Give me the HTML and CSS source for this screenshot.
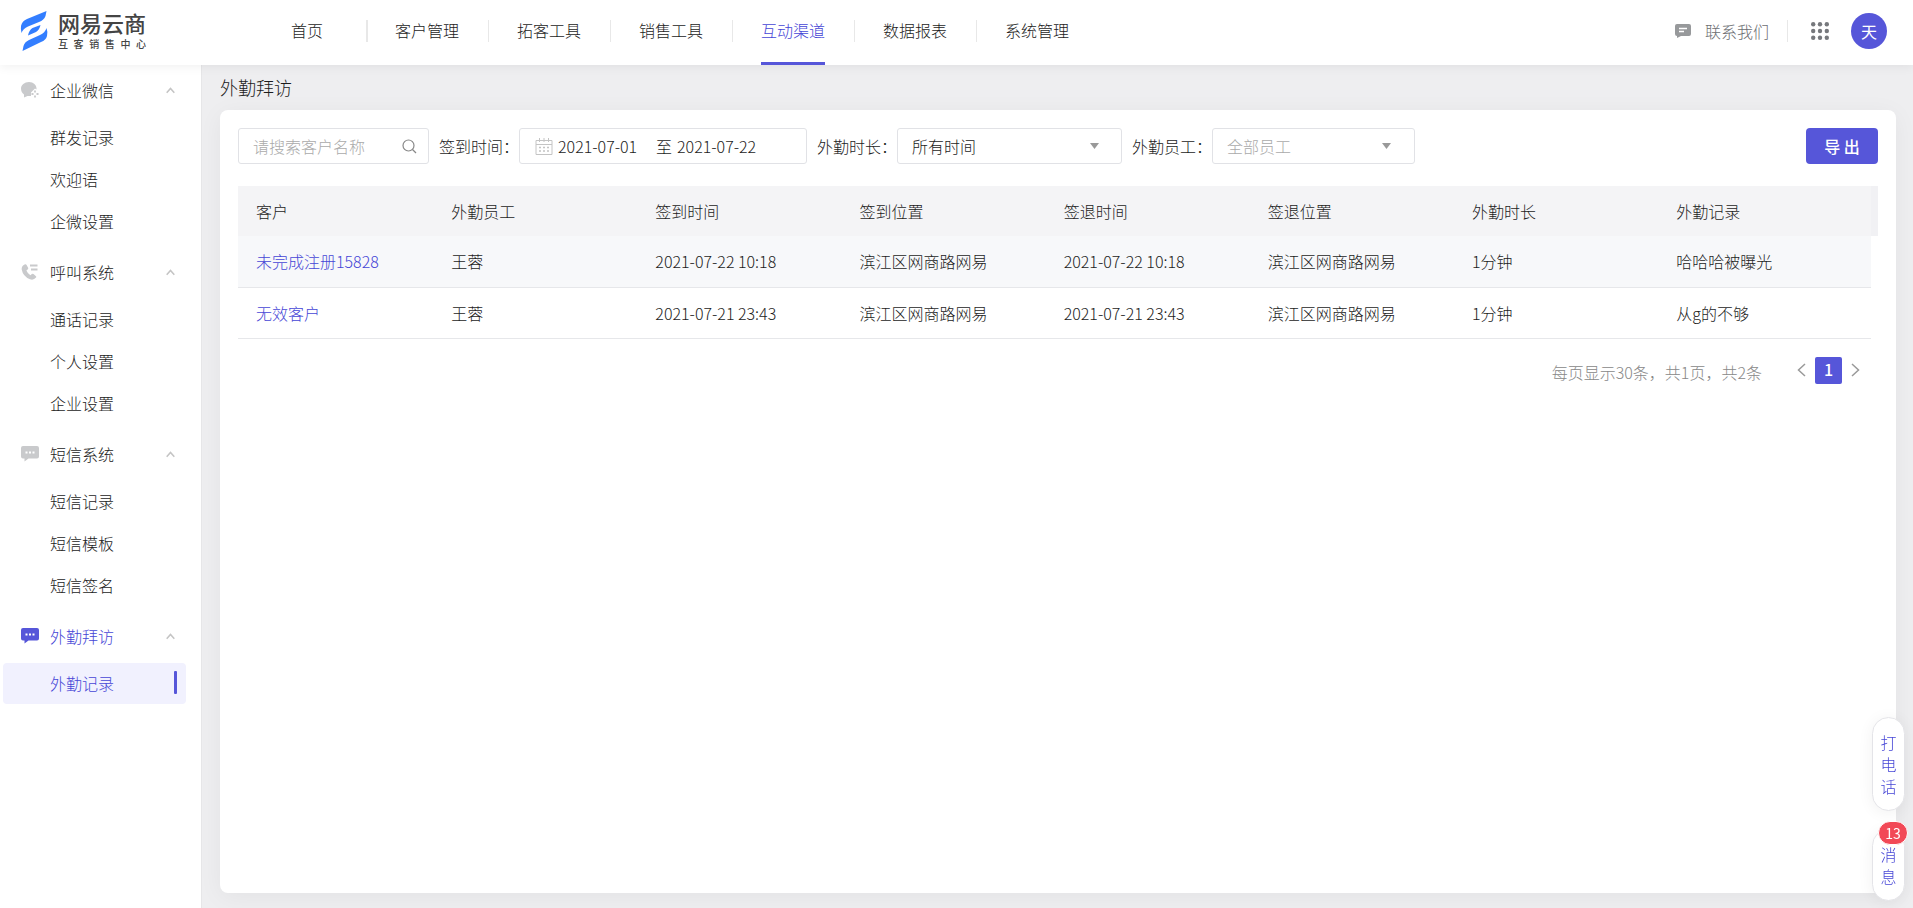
FILE: index.html
```html
<!DOCTYPE html>
<html lang="zh-CN">
<head>
<meta charset="utf-8">
<title>外勤拜访</title>
<link rel="stylesheet" href="styles.css">
</head>
<body>
<header class="topbar">
  <a class="logo" href="#">
    <svg class="logo-mark" width="28" height="42" viewBox="0 0 28 42" aria-hidden="true">
      <path fill="#337eff" d="M26.500 1 25.500 6Q24 10 19 12L8 16.500Q3 18.500 1.500 23Q.5 19 1 16Q2 11 7 9ZM20.500 15Q19.500 20 16 22L8 25.500Q9 20 12.500 18ZM26.500 18Q28 22 27 26Q26 30 21 32L2.500 41 3.500 36Q4.500 32 9 30L20 25Q25 23 26.500 18Z"/>
    </svg>
    <span class="logo-words">
      <span class="logo-name">网易云商</span>
      <span class="logo-sub">互客销售中心</span>
    </span>
  </a>
  <nav class="nav">
    <a class="nav-home" href="#">首页</a>
    <a href="#">客户管理</a>
    <a href="#">拓客工具</a>
    <a href="#">销售工具</a>
    <a class="active" href="#">互动渠道</a>
    <a href="#">数据报表</a>
    <a href="#">系统管理</a>
  </nav>
  <div class="tools">
    <a class="contact" href="#">
      <svg width="18" height="16" viewBox="0 0 18 16" aria-hidden="true"><path fill="#97999b" d="M3 1h12q2 0 2 2v8q0 2-2 2H7l-4 2v-2H3q-2 0-2-2V3q0-2 2-2z"/><path stroke="#fff" stroke-width="1.500" d="M5 5.500h8M5 8.500h5"/></svg>
      <span>联系我们</span>
    </a>
    <button class="apps" type="button" aria-label="应用">
      <svg width="18" height="18" viewBox="0 0 18 18" fill="#76787c" aria-hidden="true"><circle cx="2.200" cy="2.200" r="2.200"/><circle cx="9" cy="2.200" r="2.200"/><circle cx="15.800" cy="2.200" r="2.200"/><circle cx="2.200" cy="9" r="2.200"/><circle cx="9" cy="9" r="2.200"/><circle cx="15.800" cy="9" r="2.200"/><circle cx="2.200" cy="15.800" r="2.200"/><circle cx="9" cy="15.800" r="2.200"/><circle cx="15.800" cy="15.800" r="2.200"/></svg>
    </button>
    <button class="avatar" type="button">天</button>
  </div>
</header>
<div class="layout">
  <aside class="sidebar">
    <section class="group">
      <button class="group-head" type="button">
        <svg width="18" height="16" viewBox="0 0 18 16" aria-hidden="true"><path fill="#c9cacc" d="M8 0c4.500 0 7.500 3 7.500 6.500v1l-1.500-1-4 4v3.500H6.500L3 15.500V12.500C1 11 0 9 0 6.500 0 3 3.500 0 8 0z"/><path fill="none" stroke="#c9cacc" stroke-width="1.800" d="M14 8.500v2M14 13.500v2M10.500 12h2M15.500 12h2"/></svg>
        <span>企业微信</span>
        <svg class="caret" width="9" height="7" viewBox="0 0 9 7" aria-hidden="true"><path d="M.7 5.800 4.500 1.500l3.800 4.300"/></svg>
      </button>
      <ul><li><a href="#">群发记录</a></li><li><a href="#">欢迎语</a></li><li><a href="#">企微设置</a></li></ul>
    </section>
    <section class="group">
      <button class="group-head" type="button">
        <svg width="18" height="16" viewBox="0 0 18 16" aria-hidden="true"><path fill="#c9cacc" d="M2 1.500 4 .3q1-.3 1.600.7l1.500 2.800q.4 1-.5 1.700L5.400 6.500q1.200 3 4 4.800l1.500-1.200q.8-.6 1.600 0l2.200 1.800q1 .8.300 1.700-2.500 3-6 1.700Q2 12.500.7 5.500.4 3 2 1.500z"/><path stroke="#c9cacc" stroke-width="2" d="M9 1.500h7.500M10 5.500h6.500"/></svg>
        <span>呼叫系统</span>
        <svg class="caret" width="9" height="7" viewBox="0 0 9 7" aria-hidden="true"><path d="M.7 5.800 4.500 1.500l3.800 4.300"/></svg>
      </button>
      <ul><li><a href="#">通话记录</a></li><li><a href="#">个人设置</a></li><li><a href="#">企业设置</a></li></ul>
    </section>
    <section class="group">
      <button class="group-head" type="button">
        <svg width="18" height="16" viewBox="0 0 18 16" aria-hidden="true"><path fill="#c9cacc" d="M2 0h14q2 0 2 2v8.500q0 2-2 2H7.500L3.500 15.500v-3H2q-2 0-2-2V2q0-2 2-2z"/><path fill="#fff" d="M4.500 5.500h2v2h-2zM8 5.500h2v2H8zM11.500 5.500h2v2h-2z"/></svg>
        <span>短信系统</span>
        <svg class="caret" width="9" height="7" viewBox="0 0 9 7" aria-hidden="true"><path d="M.7 5.800 4.500 1.500l3.800 4.300"/></svg>
      </button>
      <ul><li><a href="#">短信记录</a></li><li><a href="#">短信模板</a></li><li><a href="#">短信签名</a></li></ul>
    </section>
    <section class="group">
      <button class="group-head current" type="button">
        <svg width="18" height="16" viewBox="0 0 18 16" aria-hidden="true"><path fill="#5656d9" d="M2 0h14q2 0 2 2v8.500q0 2-2 2H7.500L3.500 15.500v-3H2q-2 0-2-2V2q0-2 2-2z"/><path fill="#fff" d="M4.500 5.500h2v2h-2zM8 5.500h2v2H8zM11.500 5.500h2v2h-2z"/></svg>
        <span>外勤拜访</span>
        <svg class="caret" width="9" height="7" viewBox="0 0 9 7" aria-hidden="true"><path d="M.7 5.800 4.500 1.500l3.800 4.300"/></svg>
      </button>
      <ul><li><a class="selected" href="#">外勤记录</a></li></ul>
    </section>
  </aside>
  <main class="main">
    <h1>外勤拜访</h1>
    <div class="card">
      <form class="filters">
        <div class="box search">
          <input type="text" placeholder="请搜索客户名称" aria-label="客户名称">
          <svg width="15" height="15" viewBox="0 0 15 15" fill="none" stroke="#888" stroke-width="1.200" aria-hidden="true"><circle cx="6.500" cy="6.500" r="5.500"/><path d="M10.500 10.500 14 14"/></svg>
        </div>
        <label for="from">签到时间：</label>
        <div class="box dates">
          <svg width="18" height="17" viewBox="0 0 18 17" fill="none" stroke="#c4c4c4" aria-hidden="true"><path d="M1 2.500h16v14H1zM1 6.500h16M4.500 0v4M9 0v4M13.500 0v4"/><path stroke-width="1.500" stroke-dasharray="2 2" d="M4 9.500h10M4 13h10"/></svg>
          <input id="from" type="text" value="2021-07-01">
          <span>至</span>
          <input type="text" value="2021-07-22" aria-label="结束日期">
        </div>
        <label for="duration">外勤时长：</label>
        <div class="box pick pick-duration">
          <select id="duration"><option>所有时间</option></select>
          <svg width="9" height="6" viewBox="0 0 9 6" aria-hidden="true"><path fill="#999" d="M0 0h9L4.500 6z"/></svg>
        </div>
        <label for="staff">外勤员工：</label>
        <div class="box pick pick-staff">
          <select id="staff" class="empty"><option>全部员工</option></select>
          <svg width="9" height="6" viewBox="0 0 9 6" aria-hidden="true"><path fill="#999" d="M0 0h9L4.500 6z"/></svg>
        </div>
        <button class="export" type="button">导 出</button>
      </form>
      <table>
        <colgroup><col class="c-first"><col class="c"><col class="c"><col class="c"><col class="c"><col class="c"><col class="c"><col><col class="c-gutter"></colgroup>
        <thead>
          <tr><th>客户</th><th>外勤员工</th><th>签到时间</th><th>签到位置</th><th>签退时间</th><th>签退位置</th><th>外勤时长</th><th>外勤记录</th><td class="gutter"></td></tr>
        </thead>
        <tbody>
          <tr class="hover"><td><a href="#">未完成注册15828</a></td><td>王蓉</td><td>2021-07-22 10:18</td><td>滨江区网商路网易</td><td>2021-07-22 10:18</td><td>滨江区网商路网易</td><td>1分钟</td><td>哈哈哈被曝光</td></tr>
          <tr><td><a href="#">无效客户</a></td><td>王蓉</td><td>2021-07-21 23:43</td><td>滨江区网商路网易</td><td>2021-07-21 23:43</td><td>滨江区网商路网易</td><td>1分钟</td><td>从g的不够</td></tr>
        </tbody>
      </table>
      <div class="pager">
        <p>每页显示30条，共1页，共2条</p>
        <div class="pages">
          <button type="button" aria-label="上一页"><svg width="9" height="14" viewBox="0 0 9 14" aria-hidden="true"><path d="M8 1 1.500 7 8 13"/></svg></button>
          <button class="page" type="button">1</button>
          <button type="button" aria-label="下一页"><svg width="9" height="14" viewBox="0 0 9 14" aria-hidden="true"><path d="M1 1 7.500 7 1 13"/></svg></button>
        </div>
      </div>
    </div>
  </main>
</div>
<div class="floats">
  <button class="float" type="button">打电话</button>
  <button class="float message" type="button">消息<span class="badge">13</span></button>
</div>
</body>
</html>
```

FILE: styles.css
```css
* { box-sizing: border-box; }

body {
  margin: 0;
  min-height: 100vh;
  display: flex;
  flex-direction: column;
  background: #eeeef0;
  color: #1c1c1c;
  font: 300 16px/24px "Noto Sans CJK SC", sans-serif;
}

a { color: inherit; text-decoration: none; }
ul, p, h1 { margin: 0; padding: 0; list-style: none; }
button, input, select { font: inherit; color: inherit; border: 0; background: none; padding: 0; margin: 0; }
svg { display: block; flex: none; }

.topbar {
  position: relative;
  z-index: 1;
  display: flex;
  align-items: flex-start;
  height: 65px;
  padding: 0 26px 0 20px;
  background: #fff;
  box-shadow: 0 2px 10px rgba(0, 0, 0, .06);
}
.logo { display: flex; gap: 10px; padding-top: 10px; width: 271px; }
.logo-words {
  display: flex;
  flex-direction: column;
  width: 88px;
  padding-top: 1px;
  color: #444;
  font-family: "Liberation Sans", "Noto Sans CJK SC", sans-serif;
}
.logo-name { font-size: 22px; line-height: 27px; font-weight: 500; }
.logo-sub { font-size: 10px; line-height: 14px; font-weight: 500; text-align-last: justify; }

.nav { display: flex; }
.nav a { position: relative; margin: 0 29px; height: 65px; padding-top: 18px; }
.nav a:not(:last-child)::after {
  content: "";
  position: absolute;
  top: 20px;
  right: -30px;
  width: 1px;
  height: 22px;
  background: #e8e8e8;
}
.nav a.nav-home { margin: 0 43px 0 0; }
.nav a.nav-home:not(:last-child)::after { right: -45px; width: 2px; }
.nav .active { color: #4646d6; border-bottom: 3px solid #5656d9; }

.tools { display: flex; align-items: center; height: 62px; margin-left: auto; color: #6c6e72; }
.contact { display: flex; align-items: center; gap: 13px; padding-right: 18px; height: 22px; border-right: 1px solid #e8e8e8; }
.apps { margin: 0 22px 0 23px; }
.avatar { width: 36px; height: 36px; border-radius: 50%; background: #5656d9; color: #fff; font-weight: 400; }

.layout { flex: 1; display: flex; }
.sidebar { width: 202px; flex: none; background: #fff; border-right: 1px solid #e6e6e8; }
.group { margin-bottom: 5px; }
.group-head {
  display: flex;
  align-items: center;
  width: 100%;
  height: 50px;
  margin-bottom: 2px;
  padding: 0 26px 0 21px;
  gap: 11px;
}
.group-head.current { color: #4646d6; }
.caret { margin-left: auto; fill: none; stroke: #c4c4c4; stroke-width: 1.5; }
.group ul { display: flex; flex-direction: column; gap: 1px; margin: 0 15px 0 3px; }
.group li a { display: flex; align-items: center; justify-content: space-between; height: 41px; padding: 0 9px 2px 47px; border-radius: 4px; }
.group .selected { background: #f1f1fe; color: #4646d6; }
.selected::after { content: ""; width: 3px; height: 23px; border-radius: 1px; background: #5656d9; }

.main { flex: 1; min-width: 0; display: flex; flex-direction: column; padding: 0 17px 15px 18px; }
h1 { font-size: 18px; font-weight: 300; line-height: 45px; }
.card { flex: 1; background: #fff; border-radius: 8px; padding: 18px; box-shadow: 0 4px 24px rgba(0, 0, 0, .05); }

.filters { display: flex; align-items: center; gap: 10px; margin-bottom: 22px; }
.filters label { margin-right: -10px; white-space: nowrap; }
.box { display: flex; align-items: center; height: 36px; border: 1px solid #e1e2e6; border-radius: 3px; }
.box input { outline: 0; min-width: 0; }
.search { width: 191px; padding: 0 11px 0 14px; }
.search input { flex: 1; }
.search input::placeholder { color: #aaa; opacity: 1; }
.dates { width: 288px; padding-left: 15px; gap: 5px; }
.dates input { width: 93px; }
.dates input:last-child { width: 90px; }
.pick { position: relative; }
.pick select { appearance: none; width: 100%; height: 34px; padding-left: 14px; outline: 0; }
.pick svg { position: absolute; top: 14px; pointer-events: none; }
.pick .empty { color: #aaa; }
.pick-duration { width: 225px; }
.pick-duration svg { right: 22px; }
.pick-staff { width: 203px; }
.pick-staff svg { right: 23px; }
.export { margin-left: auto; width: 72px; height: 36px; border-radius: 4px; background: #5656d9; color: #fff; font-weight: 500; }

table { width: 100%; table-layout: fixed; border-collapse: collapse; }
.c-first { width: 11.9%; }
.c { width: 12.45%; }
.c-gutter { width: 7px; }
th { height: 50px; padding: 0 0 0 18px; text-align: left; font-weight: 300; background: #f4f4f6; }
.gutter { padding: 0; background: #f1f1f4; }
tbody td { height: 51px; padding: 0 0 0 18px; border-bottom: 1px solid #e6e7ea; white-space: nowrap; }
tbody a { color: #4646d6; }
.hover td { background: #f7f8fa; }

.pager { display: flex; align-items: flex-start; justify-content: flex-end; padding: 18px 18px 0 0; gap: 35px; color: #888; }
.pager p { padding-top: 3px; }
.pages { display: flex; align-items: center; gap: 9px; }
.pages svg { fill: none; stroke: #999; stroke-width: 1.5; }
.page { width: 27px; height: 27px; padding-bottom: 2px; border-radius: 2px; background: #5656d9; color: #fff; font-weight: 500; }

.floats { position: fixed; right: 8px; bottom: 7px; z-index: 2; display: flex; flex-direction: column; gap: 18px; }
.float {
  position: relative;
  width: 33px;
  padding: 13px 7px;
  border: 1px solid #e4e4e8;
  border-radius: 17px;
  background: #fff;
  box-shadow: 0 2px 16px rgba(0, 0, 0, .06);
  color: #4646d6;
  line-height: 22px;
}
.badge {
  position: absolute;
  top: -9px;
  right: -4px;
  width: 30px;
  border: 1px solid #fff;
  border-radius: 12px;
  background: #f24957;
  color: #fff;
  font-size: 14px;
  font-weight: 400;
}
```
